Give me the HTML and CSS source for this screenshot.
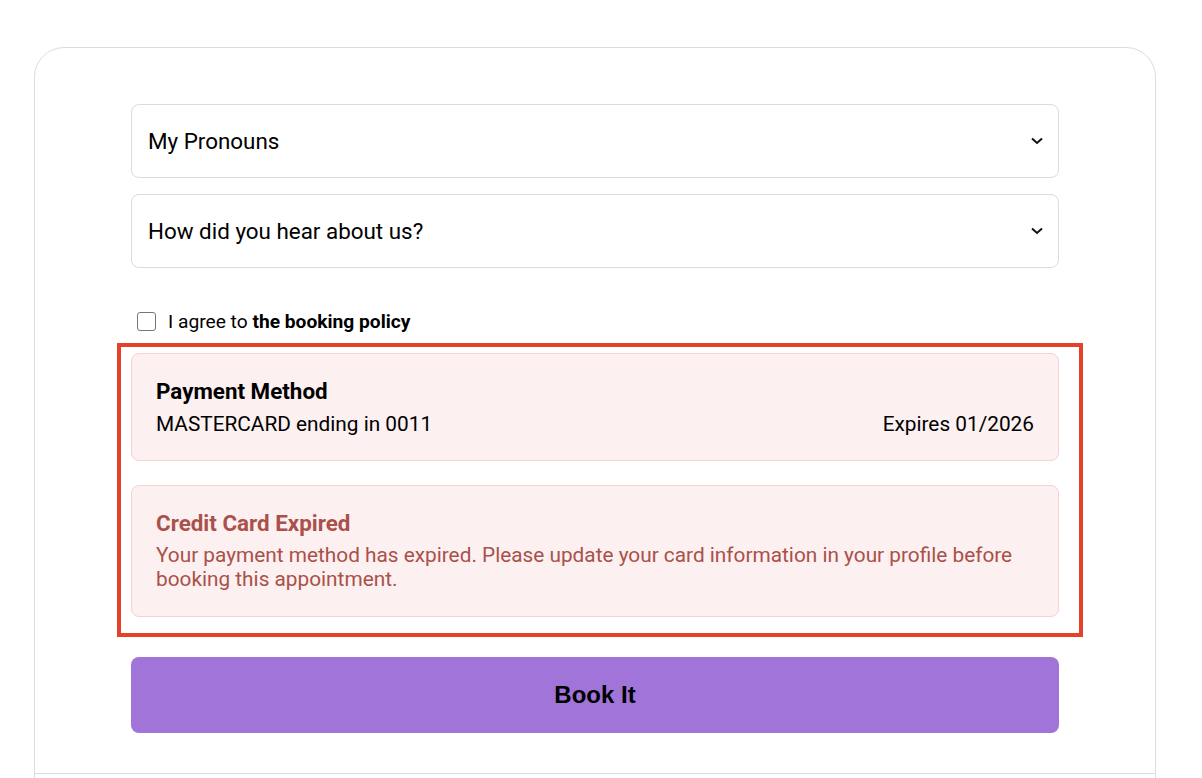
FILE: index.html
```html
<!DOCTYPE html>
<html lang="en">
<head>
<meta charset="utf-8">
<title>Booking</title>
<link rel="stylesheet" href="styles.css">
</head>
<body>
<div class="page">
  <div class="card">
    <div class="form">
      <div class="select">
        <span>My Pronouns</span>
        <svg class="chev" width="12" height="8" viewBox="0 0 12 8"><path d="M1 1.5 L6 6 L11 1.5" fill="none" stroke="#111" stroke-width="2"/></svg>
      </div>
      <div class="select">
        <span>How did you hear about us?</span>
        <svg class="chev" width="12" height="8" viewBox="0 0 12 8"><path d="M1 1.5 L6 6 L11 1.5" fill="none" stroke="#111" stroke-width="2"/></svg>
      </div>
      <label class="agree">
        <span class="box"></span>
        <span>I agree to <b>the booking policy</b></span>
      </label>
      <div class="highlight">
        <div class="panel">
          <div class="panel-title">Payment Method</div>
          <div class="row">
            <span>MASTERCARD ending in 0011</span>
            <span>Expires 01/2026</span>
          </div>
        </div>
        <div class="panel error">
          <div class="panel-title">Credit Card Expired</div>
          <div class="msg">Your payment method has expired. Please update your card information in your profile before booking this appointment.</div>
        </div>
      </div>
      <button class="book">Book It</button>
    </div>
    <div class="footer"></div>
  </div>
</div>
</body>
</html>
```
FILE: styles.css
```css
html, body {
  margin: 0;
  padding: 0;
  background: #fff;
}
body {
  font-family: Roboto, "Liberation Sans", Arial, sans-serif;
  color: #000;
}
.page {
  padding: 47px 46px 0 34px;
}
.card {
  border: 1px solid #dcdcdc;
  border-radius: 30px;
  min-height: 760px;
}
.form {
  padding: 56px 96px 40px 96px;
  display: flex;
  flex-direction: column;
}
.select {
  height: 72px;
  border: 1px solid #dcdcdc;
  border-radius: 8px;
  display: flex;
  align-items: center;
  justify-content: space-between;
  padding: 0 15px 0 16px;
  font-size: 22.4px;
  margin-bottom: 16px;
}
.chev {
  display: block;
}
.agree {
  margin-top: 27px;
  display: flex;
  align-items: center;
  gap: 12px;
  padding-left: 6px;
  font-size: 19.2px;
  height: 20px;
}
.agree .box {
  width: 17px;
  height: 17px;
  border: 1.5px solid #767676;
  border-radius: 3px;
  flex: none;
}
.agree b {
  font-weight: 700;
}
.highlight {
  margin: 12px -24px 0 -14px;
  padding: 6px 20px 16px 10px;
  border: 4px solid #e5402a;
  display: flex;
  flex-direction: column;
  gap: 24px;
}
.panel {
  background: #fcf0f0;
  border: 1px solid #f4d3d1;
  border-radius: 8px;
  padding: 23px 24px 24px 24px;
  font-size: 20.8px;
  line-height: 24px;
}
.panel-title {
  font-weight: 700;
  font-size: 22.4px;
  line-height: 28px;
  margin-bottom: 7px;
}
.row {
  display: flex;
  justify-content: space-between;
}
.error {
  color: #a9514a;
  padding-bottom: 25px;
}
.error .panel-title {
  margin-bottom: 6px;
}
.book {
  margin-top: 20px;
  height: 76px;
  border: none;
  border-radius: 8px;
  background: #a074d9;
  color: #000;
  font-family: "Liberation Sans", Arial, sans-serif;
  font-weight: 700;
  font-size: 24px;
  cursor: pointer;
}
.footer {
  border-top: 1px solid #dcdcdc;
}
```
